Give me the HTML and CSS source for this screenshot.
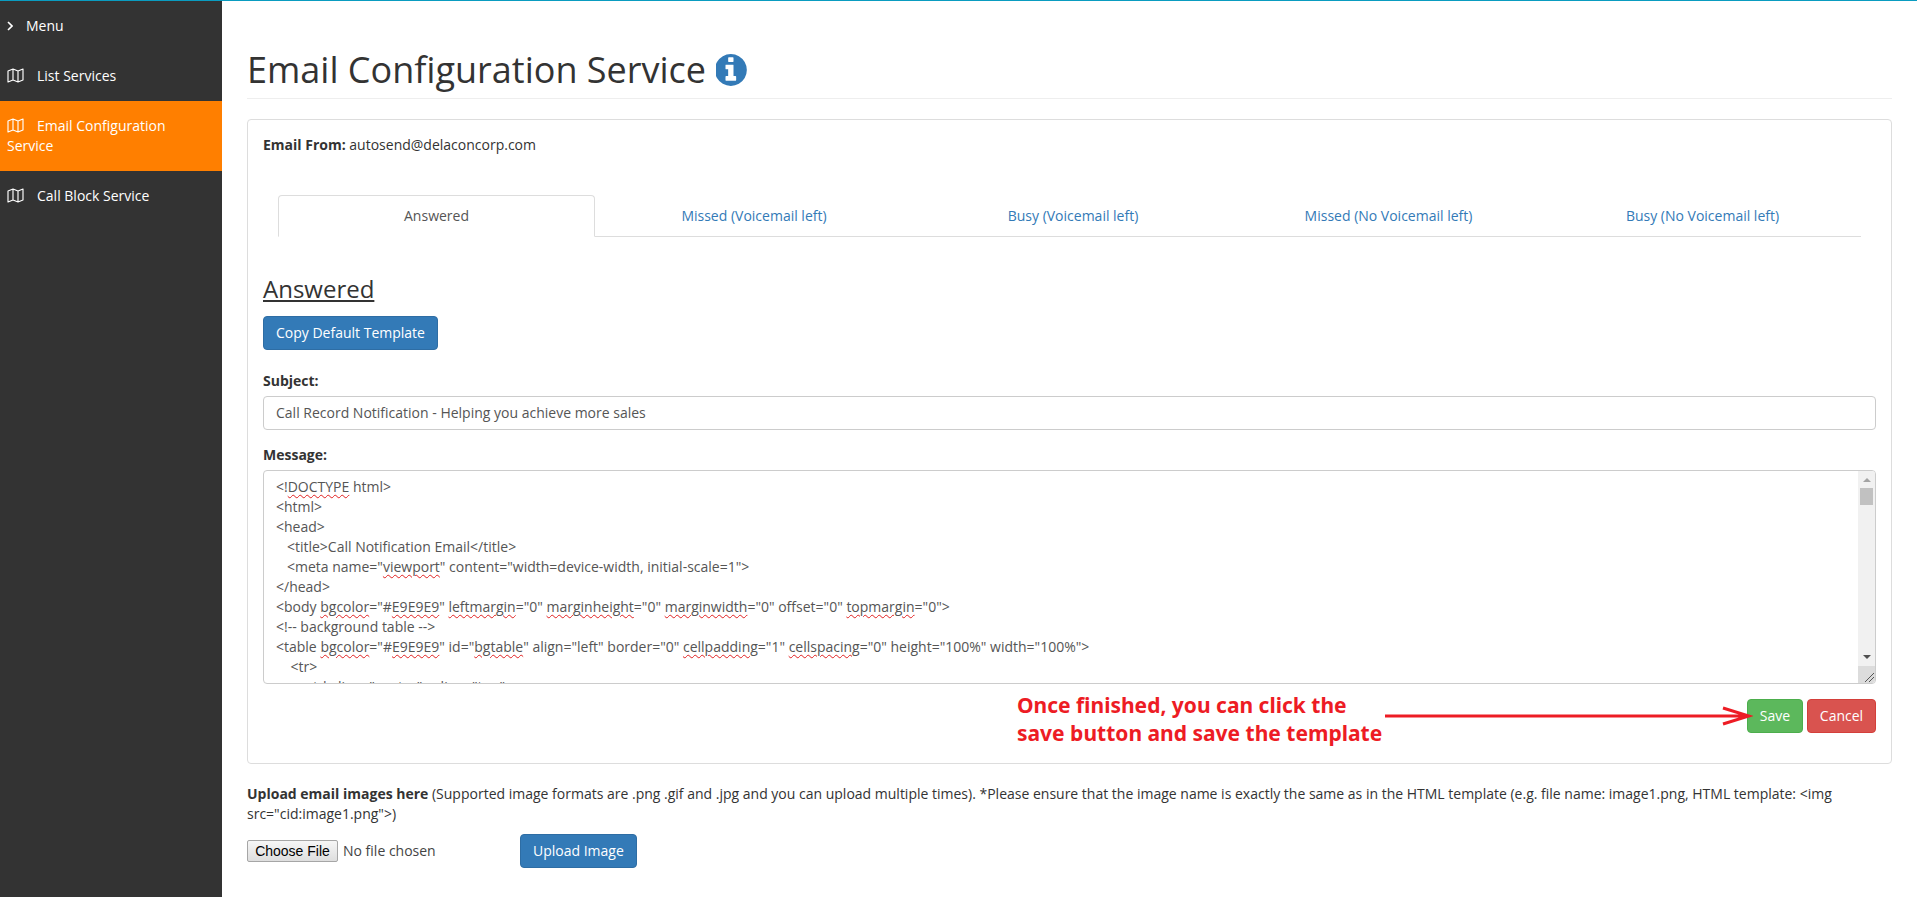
FILE: index.html
```html
<!DOCTYPE html>
<html lang="en">
<head>
<meta charset="utf-8">
<title>Email Configuration Service</title>
<link rel="stylesheet" href="styles.css">
</head>
<body>
<div class="app">
  <nav class="sidebar">
    <a class="nav-item nav-menu"><svg class="chev" viewBox="0 0 6 10"><path d="M1 1l4 4-4 4" fill="none" stroke="#fff" stroke-width="1.6"/></svg>Menu</a>
    <a class="nav-item"><svg class="map" viewBox="0 0 17 15"><path d="M1 3l5-2 5 2 5-2v11l-5 2-5-2-5 2z M6 1v11 M11 3v11" fill="none" stroke="#fff" stroke-width="1.15" stroke-linejoin="round"/></svg>List Services</a>
    <a class="nav-item active"><svg class="map" viewBox="0 0 17 15"><path d="M1 3l5-2 5 2 5-2v11l-5 2-5-2-5 2z M6 1v11 M11 3v11" fill="none" stroke="#fff" stroke-width="1.15" stroke-linejoin="round"/></svg>Email Configuration Service</a>
    <a class="nav-item"><svg class="map" viewBox="0 0 17 15"><path d="M1 3l5-2 5 2 5-2v11l-5 2-5-2-5 2z M6 1v11 M11 3v11" fill="none" stroke="#fff" stroke-width="1.15" stroke-linejoin="round"/></svg>Call Block Service</a>
  </nav>
  <main class="main">
    <header class="page-header">
      <h1>Email Configuration Service</h1>
      <svg class="info" viewBox="192 128 1472 1536"><path fill="#337ab7" d="M1152 1376v-160q0-14-9-23t-23-9h-96v-512q0-14-9-23t-23-9h-320q-14 0-23 9t-9 23v160q0 14 9 23t23 9h96v320h-96q-14 0-23 9t-9 23v160q0 14 9 23t23 9h448q14 0 23-9t9-23zm-128-896v-160q0-14-9-23t-23-9h-192q-14 0-23 9t-9 23v160q0 14 9 23t23 9h192q14 0 23-9t9-23zm640 416q0 209-103 385.5t-279.5 279.5-385.5 103-385.5-103-279.5-279.5-103-385.5 103-385.5 279.5-279.5 385.5-103 385.5 103 279.5 279.5 103 385.5z"/></svg>
    </header>
    <section class="panel">
      <p class="from"><b>Email From:</b> autosend@delaconcorp.com</p>
      <ul class="tabs">
        <li class="tab current">Answered</li>
        <li class="tab">Missed (Voicemail left)</li>
        <li class="tab">Busy (Voicemail left)</li>
        <li class="tab">Missed (No Voicemail left)</li>
        <li class="tab">Busy (No Voicemail left)</li>
      </ul>
      <h2>Answered</h2>
      <button class="btn btn-primary copy">Copy Default Template</button>
      <label class="field-label subject-label">Subject:</label>
      <div class="input">Call Record Notification - Helping you achieve more sales</div>
      <label class="field-label message-label">Message:</label>
      <div class="textarea">
        <pre class="code">&lt;!<u>DOCTYPE</u> html&gt;
&lt;html&gt;
&lt;head&gt;
   &lt;title&gt;Call Notification Email&lt;/title&gt;
   &lt;meta name="<u>viewport</u>" content="width=device-width, initial-scale=1"&gt;
&lt;/head&gt;
&lt;body <u>bgcolor</u>="#<u>E9E9E9</u>" <u>leftmargin</u>="0" <u>marginheight</u>="0" <u>marginwidth</u>="0" offset="0" <u>topmargin</u>="0"&gt;
&lt;!-- background table --&gt;
&lt;table <u>bgcolor</u>="#<u>E9E9E9</u>" id="<u>bgtable</u>" align="left" border="0" <u>cellpadding</u>="1" <u>cellspacing</u>="0" height="100%" width="100%"&gt;
    &lt;tr&gt;
        &lt;td align="center" valign="top"&gt;</pre>
        <div class="scrollbar">
          <span class="arrow-up"></span>
          <span class="thumb"></span>
          <span class="arrow-down"></span>
          <span class="resizer"><svg viewBox="0 0 17 17"><path d="M7 16l9-9M11 16l5-5" stroke="#555" stroke-width="1" fill="none"/></svg></span>
        </div>
      </div>
      <div class="actions">
        <button class="btn btn-success">Save</button>
        <button class="btn btn-danger">Cancel</button>
      </div>
      <div class="note">Once finished, you can click the<br>save button and save the template</div>
      <svg class="note-arrow" viewBox="0 0 368 20"><path d="M0 10H364M338 2l26 8-26 8" fill="none" stroke="#ed1c24" stroke-width="3"/></svg>
    </section>
    <p class="upload-text"><b>Upload email images here</b> (Supported image formats are .png .gif and .jpg and you can upload multiple times). *Please ensure that the image name is exactly the same as in the HTML template (e.g. file name: image1.png, HTML template: &lt;img src="cid:image1.png"&gt;)</p>
    <div class="upload-row">
      <div class="file">
        <button class="file-btn">Choose File</button>
        <span class="file-name">No file chosen</span>
      </div>
      <button class="btn btn-primary">Upload Image</button>
    </div>
  </main>
</div>
</body>
</html>
```
FILE: styles.css
```css
* { box-sizing: border-box; }
html, body { margin: 0; padding: 0; height: 100%; }
body {
  font-family: "Open Sans", sans-serif;
  font-size: 14px;
  line-height: 20px;
  color: #333;
  background: #fff;
  overflow: hidden;
}
.app {
  display: flex;
  height: 897px;
  border-top: 1px solid #0a9cc0;
}
.sidebar {
  flex: 0 0 222px;
  background: #333;
}
.nav-item {
  display: block;
  padding: 15px 7px;
  color: #fff;
  line-height: 20px;
}
.nav-item.active { background: #ff7f00; }
.chev { width: 6px; height: 10px; margin-right: 13px; }
.map { width: 17px; height: 15px; margin-right: 13px; vertical-align: -2px; }
.main {
  flex: 1;
  min-width: 0;
  padding: 0 25px;
}
.page-header {
  display: flex;
  align-items: center;
  height: 98px;
  padding-top: 47px;
  padding-bottom: 6px;
  border-bottom: 1px solid #eee;
}
h1 {
  margin: 0;
  font-size: 36px;
  line-height: 44px;
  font-weight: 400;
}
.info { width: 31px; height: 32px; margin-left: 10px; }
.panel {
  position: relative;
  margin-top: 20px;
  padding: 15px;
  height: 645px;
  border: 1px solid #ddd;
  border-radius: 4px;
}
.from { margin: 0; }
.tabs {
  display: grid;
  grid-template-columns: 317px 318px 320px 311px 1fr;
  list-style: none;
  margin: 40px 15px 0;
  padding: 0;
  height: 42px;
  border-bottom: 1px solid #ddd;
}
.tab {
  text-align: center;
  color: #337ab7;
  padding-top: 11px;
  height: 42px;
}
.tab.current {
  color: #555;
  background: #fff;
  border: 1px solid #ddd;
  border-bottom-color: #fff;
  border-radius: 4px 4px 0 0;
  padding-top: 10px;
}
h2 {
  margin: 37px 0 0;
  font-size: 24px;
  line-height: 30px;
  font-weight: 400;
  text-decoration: underline;
}
.btn {
  display: inline-block;
  font: inherit;
  padding: 6px 12px;
  height: 34px;
  border: 1px solid transparent;
  border-radius: 4px;
  color: #fff;
}
.btn-primary { background: #337ab7; border-color: #2e6da4; }
.btn-success { background: #5cb85c; border-color: #4cae4c; width: 56px; padding: 6px 0; }
.btn-danger { background: #d9534f; border-color: #d43f3a; width: 69px; padding: 6px 0; }
.copy { display: block; margin-top: 12px; }
.field-label { display: block; font-weight: 700; }
.subject-label { margin-top: 21px; }
.input {
  margin-top: 5px;
  height: 34px;
  padding: 6px 12px;
  border: 1px solid #ccc;
  border-radius: 4px;
  color: #555;
}
.message-label { margin-top: 15px; }
.textarea {
  display: flex;
  margin-top: 5px;
  height: 214px;
  border: 1px solid #ccc;
  border-radius: 4px;
  overflow: hidden;
  color: #555;
}
.code {
  flex: 1;
  min-width: 0;
  margin: 0;
  padding: 6px 12px 0;
  font: inherit;
  white-space: pre;
  overflow: hidden;
}
.code u {
  text-decoration: underline wavy #e02020 1px;
  text-underline-offset: 2px;
}
.scrollbar {
  flex: 0 0 17px;
  display: flex;
  flex-direction: column;
  align-items: center;
  background: #f1f1f1;
  position: relative;
}
.arrow-up {
  margin-top: 7px;
  border: 4px solid transparent;
  border-top: 0;
  border-bottom: 4px solid #a3a3a3;
}
.thumb {
  margin-top: 6px;
  width: 13px;
  height: 17px;
  background: #c1c1c1;
}
.arrow-down {
  margin-top: 150px;
  border: 4px solid transparent;
  border-bottom: 0;
  border-top: 4px solid #505050;
}
.resizer {
  position: absolute;
  right: 0;
  bottom: 0;
  width: 17px;
  height: 17px;
  background: #dcdcdc;
}
.resizer svg { display: block; }
.actions {
  display: flex;
  justify-content: flex-end;
  gap: 4px;
  margin-top: 15px;
}
.note {
  position: absolute;
  left: 769px;
  top: 571px;
  font-family: "Noto Sans", sans-serif;
  font-size: 21px;
  line-height: 28px;
  font-weight: 700;
  color: #ed1c24;
  white-space: nowrap;
}
.note-arrow {
  position: absolute;
  left: 1137px;
  top: 586px;
  width: 368px;
  height: 20px;
}
.upload-text { margin: 20px 0 0; }
.upload-row {
  display: flex;
  align-items: center;
  margin-top: 10px;
}
.file { display: flex; align-items: center; width: 273px; }
.file-btn {
  width: 91px;
  height: 22px;
  padding: 0;
  font-family: "Liberation Sans", sans-serif;
  font-size: 14px;
  color: #000;
  background: linear-gradient(#f6f6f6, #dedede);
  border: 1px solid #a6a6a6;
  border-radius: 2px;
}
.file-name { margin-left: 5px; color: #444; }
```
